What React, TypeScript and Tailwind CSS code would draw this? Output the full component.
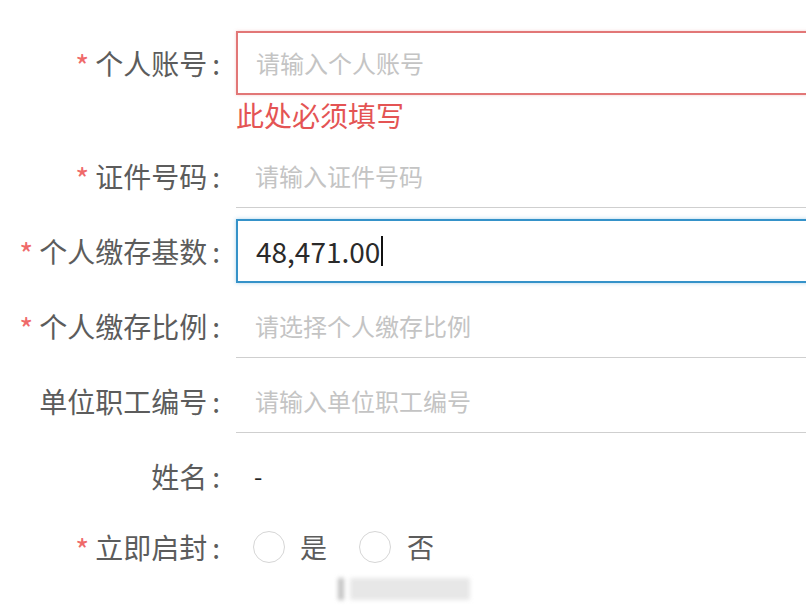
import React from "react";

const font = { fontFamily: '"Noto Sans CJK SC", "Noto Sans", sans-serif' };

function Label({ text, required }: { text: string; required?: boolean }) {
  return (
    <div className="w-[236px] shrink-0 pr-[16px] flex items-center justify-end text-[28px] text-[#5c5c5c]">
      {required && <span className="text-[#ef6a6a] text-[30px] mr-[6px] mt-[5px]">*</span>}
      <span>{text}</span>
      <span className="ml-[5px]">:</span>
    </div>
  );
}

function UnderlineField({ placeholder }: { placeholder: string }) {
  return (
    <div className="w-[600px] shrink-0 h-full flex items-center pl-[19px] border-b border-[#cfcfcf] text-[24px] text-[#c4c4c4]">
      {placeholder}
    </div>
  );
}

export default function App() {
  return (
    <div className="relative w-[806px] h-[609px] overflow-hidden bg-white" style={font}>
      <div className="flex flex-col pt-[31px]">
        {/* 个人账号 */}
        <div className="flex items-center h-[64px]">
          <Label text="个人账号" required />
          <div className="w-[600px] shrink-0 h-full flex items-center pl-[18px] border-2 border-[#e27777] shadow-[0_0_3px_rgba(226,119,119,0.35)] text-[24px] text-[#c4c4c4]">
            请输入个人账号
          </div>
        </div>
        <div className="h-[49px] pl-[236px] text-[28px] leading-[40px] text-[#e45454]">此处必须填写</div>

        <div className="flex flex-col gap-[11px]">
          <div className="flex items-center h-[64px]">
            <Label text="证件号码" required />
            <UnderlineField placeholder="请输入证件号码" />
          </div>

          <div className="flex items-center h-[64px]">
            <Label text="个人缴存基数" required />
            <div className="w-[600px] shrink-0 h-full flex items-center pl-[18px] border-2 border-[#3592c9] shadow-[0_0_4px_rgba(53,146,201,0.4)] text-[28px] text-[#2a2a2a]">
              <span>48,471.00</span>
              <span className="w-[2px] h-[30px] bg-[#111] ml-[1px]" />
            </div>
          </div>

          <div className="flex items-center h-[64px]">
            <Label text="个人缴存比例" required />
            <UnderlineField placeholder="请选择个人缴存比例" />
          </div>

          <div className="flex items-center h-[64px]">
            <Label text="单位职工编号" />
            <UnderlineField placeholder="请输入单位职工编号" />
          </div>

          <div className="flex items-center h-[64px]">
            <Label text="姓名" />
            <div className="pl-[18px] text-[24px] text-[#222]">-</div>
          </div>

          <div className="flex items-center h-[64px] -mt-[4px]">
            <Label text="立即启封" required />
            <div className="flex items-center pl-[17px] text-[27px] text-[#5c5c5c]">
              <span className="w-[32px] h-[32px] rounded-full border border-[#d6d6d6]" />
              <span className="ml-[15px]">是</span>
              <span className="w-[32px] h-[32px] rounded-full border border-[#d6d6d6] ml-[32px]" />
              <span className="ml-[16px]">否</span>
            </div>
          </div>
        </div>
      </div>

      {/* faint watermark */}
      <div className="absolute left-[338px] top-[578px] w-[132px] h-[22px] flex gap-[6px] blur-[2px] opacity-60">
        <div className="w-[6px] h-full bg-[#9a9a9a]" />
        <div className="flex-1 h-full bg-[#d8d8d8]" />
      </div>
    </div>
  );
}
